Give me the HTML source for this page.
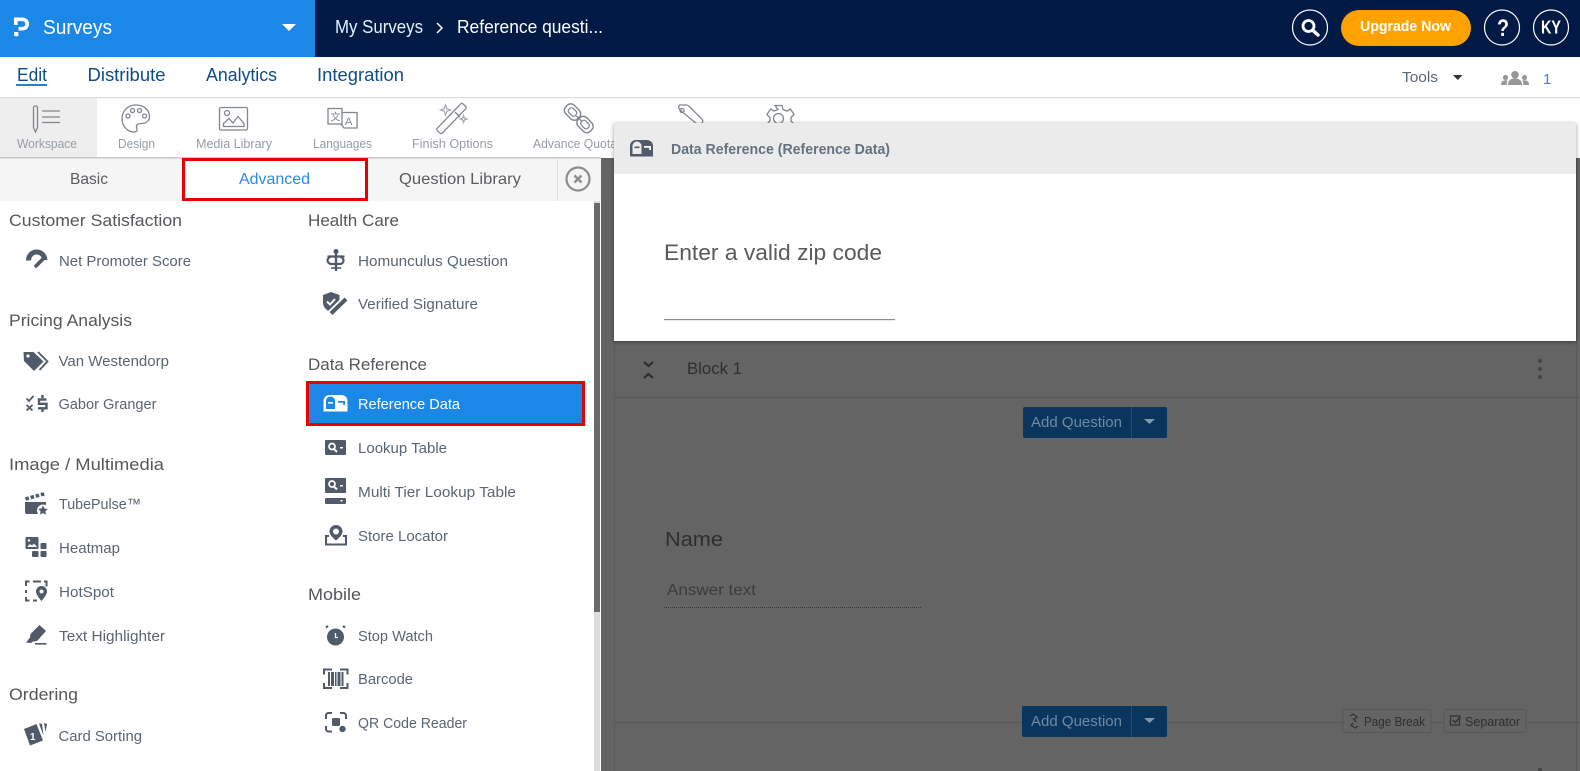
<!DOCTYPE html>
<html lang="en"><head><meta charset="utf-8"><title>Surveys</title>
<style>
html,body{margin:0;padding:0;background:#fff;width:1580px;height:771px;overflow:hidden}
svg{display:block}
text{font-family:"Liberation Sans",sans-serif}
.h{font-size:17px;fill:#55575b}
.i{font-size:15px;fill:#5a6573}
.t{font-size:12.5px;fill:#969da6}
.n{font-size:18px;fill:#0f4c86}
.s{fill:none;stroke:#80868f;stroke-width:1.3}
.g{fill:#505a69}
</style></head><body>
<svg width="1580" height="771" viewBox="0 0 1580 771" xmlns="http://www.w3.org/2000/svg">
<rect width="1580" height="771" fill="#fff"/>
<!-- top bar -->
<rect width="1580" height="57" fill="#001a45"/>
<rect width="315" height="57" fill="#1b88e8"/>
<path d="M14 17.500h8.500a6.500 6.500 0 0 1 0 13H18.500v-3.600h4a2.900 2.900 0 0 0 0-5.800H14z" fill="#fff"/>
<rect x="14" y="21" width="3.600" height="4" fill="#fff"/>
<rect x="14" y="32" width="4.500" height="4.200" rx="1.500" fill="#fff"/>
<text x="43" y="34" font-size="20" fill="#fff" textLength="69" lengthAdjust="spacingAndGlyphs">Surveys</text>
<path d="M282 24h14l-7 7z" fill="#fff"/>
<text x="335" y="33" font-size="18" fill="#e3f2fd" textLength="88" lengthAdjust="spacingAndGlyphs">My Surveys</text>
<path d="M437 23l5 5-5 5" fill="none" stroke="#fff" stroke-width="1.500"/>
<text x="457" y="33" font-size="18" fill="#fff" textLength="146" lengthAdjust="spacingAndGlyphs">Reference questi...</text>
<circle cx="1310" cy="27.500" r="17.500" fill="none" stroke="#fff" stroke-width="1.200"/>
<circle cx="1308.500" cy="26" r="5.500" fill="none" stroke="#fff" stroke-width="2.800"/>
<path d="M1313 30.500l5 4.500" stroke="#fff" stroke-width="3.400" stroke-linecap="round"/>
<rect x="1341" y="10" width="130" height="36" rx="18" fill="#ffa200"/>
<text x="1360" y="31" font-size="14.500" font-weight="bold" fill="#fff" textLength="91" lengthAdjust="spacingAndGlyphs">Upgrade Now</text>
<circle cx="1502" cy="27.500" r="17.500" fill="none" stroke="#fff" stroke-width="1.200"/>
<text x="1497" y="36" font-size="24" font-weight="bold" fill="#fff" textLength="12" lengthAdjust="spacingAndGlyphs">?</text>
<circle cx="1551" cy="27.500" r="17.500" fill="none" stroke="#fff" stroke-width="1.200"/>
<text x="1541" y="33.500" font-size="18" font-weight="bold" fill="#fff" textLength="20" lengthAdjust="spacingAndGlyphs">KY</text>
<!-- nav -->
<text x="17" y="81" class="n" textLength="30" lengthAdjust="spacingAndGlyphs">Edit</text>
<rect x="16" y="84" width="31" height="2" fill="#1b88c9"/>
<text x="87.500" y="81" class="n" textLength="78" lengthAdjust="spacingAndGlyphs">Distribute</text>
<text x="206" y="81" class="n" textLength="71" lengthAdjust="spacingAndGlyphs">Analytics</text>
<text x="317" y="81" class="n" textLength="87" lengthAdjust="spacingAndGlyphs">Integration</text>
<text x="1402" y="82" font-size="15" fill="#5b6875" textLength="36" lengthAdjust="spacingAndGlyphs">Tools</text>
<path d="M1453 75h9.500l-4.750 5z" fill="#333"/>
<g fill="#979797"><circle cx="1515" cy="74.800" r="3.800"/><path d="M1508 85c0-4.500 2.500-6.500 7-6.500s7 2 7 6.500z"/><circle cx="1505.500" cy="77.500" r="2.600"/><path d="M1501 85c0-3 1.500-4.800 4.500-4.800 1 0 1.500.2 2 .5-.6 1-.8 2.600-.8 4.300z"/><circle cx="1524.500" cy="77.500" r="2.600"/><path d="M1529 85c0-3-1.500-4.800-4.500-4.800-1 0-1.500.2-2 .5.600 1 .8 2.600.8 4.300z"/></g>
<text x="1543" y="84" font-size="15" fill="#3a86d8">1</text>
<rect y="97" width="1580" height="1.200" fill="#dcdcdc"/>
<!-- toolbar -->
<rect y="98" width="97" height="60" fill="#eeeeee"/>
<g class="s">
<path d="M33.500 107.500a1.500 1.500 0 0 1 1.500-1.500h1a1.500 1.500 0 0 1 1.500 1.500v20l-2 4.500-2-4.500z"/><path d="M42 111h18M42 117h18M42 122.500h18"/>
<path d="M136 105c-8 0-14 6-14 13.500 0 7 5 13.500 12 13.500 4 0 3-3 2.500-5-.5-2.500 2-3.500 5-3.500 5 0 8-3 8-6.500C149.500 110 144 105 136 105z"/>
<circle cx="128" cy="116" r="2"/><circle cx="132.500" cy="110.500" r="2"/><circle cx="139.500" cy="110.500" r="2"/><circle cx="144.500" cy="116" r="2"/>
<rect x="219.500" y="107.500" width="28" height="22.500" rx="1.500"/><circle cx="227" cy="113" r="2.500"/><path d="M223.500 126.500v-3l5.500-5 4 4.500 5-6.500 6 7v3z"/>
<path d="M328 108.500h14v15.500h-14z"/><path d="M342 112.500h15v15.500h-13l-3-4"/>
<rect x="448" y="100" width="7" height="37" rx="1.500" transform="rotate(44 451.500 118.500)"/>
<path d="M456 113l5 5" transform="translate(-1 -1)"/>
<path d="M445.500 105l1.300 3.700 3.700 1.300-3.700 1.300-1.300 3.700-1.300-3.700-3.700-1.300 3.700-1.300z" stroke="#a8adb4"/><path d="M463.500 115.500l.9 2.600 2.600.9-2.600.9-.9 2.600-.9-2.600-2.600-.9 2.600-.9z" stroke="#a8adb4"/>
<rect x="564" y="106" width="17" height="12" rx="5" transform="rotate(45 572.500 112)" stroke-width="1.400"/>
<rect x="568" y="109" width="9" height="6" rx="2.500" transform="rotate(45 572.500 112)"/>
<rect x="576.500" y="118.500" width="17" height="12" rx="5" transform="rotate(45 585 124.500)" stroke-width="1.400"/>
<rect x="580.500" y="121.500" width="9" height="6" rx="2.500" transform="rotate(45 585 124.500)"/>
<path d="M576.500 116l5 5"/>
<path d="M680 105h6a4 4 0 0 1 3 1.200l13 13c1 1 1 2.500 0 3.500l-3 3-17-14-2.500-2.500a3 3 0 0 1-.8-2V108a3 3 0 0 1 1.300-3z"/><circle cx="682" cy="110.500" r="2"/>
<path d="M775 105.500h7l1 4 4 1.500 3.500-2 3.500 5.500-3 3v3.500l3 3-3.500 5h-20l-3.500-5 3-3V117.500l-3-3 3.500-5.500 3.500 2 4-1.500z"/><circle cx="778.500" cy="118.500" r="5"/>
</g>
<text x="330.500" y="120.500" font-size="10" fill="#7f858e" style="font-family:'Noto Sans CJK SC',sans-serif">文</text>
<text x="345" y="125" font-size="11" fill="#7f858e">A</text>
<text x="17" y="148" class="t" textLength="60" lengthAdjust="spacingAndGlyphs">Workspace</text>
<text x="118" y="148" class="t" textLength="37" lengthAdjust="spacingAndGlyphs">Design</text>
<text x="196" y="148" class="t" textLength="76" lengthAdjust="spacingAndGlyphs">Media Library</text>
<text x="313" y="148" class="t" textLength="59" lengthAdjust="spacingAndGlyphs">Languages</text>
<text x="412" y="148" class="t" textLength="81" lengthAdjust="spacingAndGlyphs">Finish Options</text>
<text x="533" y="148" class="t" textLength="84" lengthAdjust="spacingAndGlyphs">Advance Quota</text>
<!-- tabs -->
<rect y="157" width="601" height="44" fill="#f5f5f5"/>
<rect y="157" width="601" height="1.500" fill="#c8c8c8"/>
<text x="70" y="184" font-size="16" fill="#5a5c60" textLength="38" lengthAdjust="spacingAndGlyphs">Basic</text>
<rect x="183.500" y="159.500" width="183" height="40" fill="#fff" stroke="#e60000" stroke-width="3"/>
<text x="239" y="184" font-size="16" fill="#2b8ae6" textLength="71" lengthAdjust="spacingAndGlyphs">Advanced</text>
<text x="399" y="184" font-size="16" fill="#5a5c60" textLength="122" lengthAdjust="spacingAndGlyphs">Question Library</text>
<rect x="557" y="158" width="1" height="43" fill="#ddd"/>
<circle cx="578" cy="179" r="11.500" fill="none" stroke="#8d8d8d" stroke-width="2.200"/>
<path d="M574.500 175.500l7 7M581.500 175.500l-7 7" stroke="#8d8d8d" stroke-width="2.400"/>
<!-- scrollbar -->
<rect x="594" y="201" width="6" height="570" fill="#dcdcdc"/>
<rect x="594" y="203" width="6" height="409" fill="#6a6a6a"/>
<!-- sidebar left -->
<text x="9" y="226" class="h" textLength="173" lengthAdjust="spacingAndGlyphs">Customer Satisfaction</text>
<path d="M28.500 260.500a8.200 8.200 0 0 1 16.400-.5" fill="none" stroke="#505a69" stroke-width="5"/>
<path d="M36 266l7-7" stroke="#fff" stroke-width="6"/>
<path d="M36 266l7.500-7.500" stroke="#505a69" stroke-width="3.600" stroke-linecap="round"/>
<text x="59" y="266" class="i" textLength="132" lengthAdjust="spacingAndGlyphs">Net Promoter Score</text>
<text x="9" y="326" class="h" textLength="123" lengthAdjust="spacingAndGlyphs">Pricing Analysis</text>
<path d="M23.500 352h10l10 9.500-9.500 9.500-10-10z" class="g"/><path d="M38 352l9.500 9.500-8 8.500" fill="none" stroke="#505a69" stroke-width="1.800"/><circle cx="28" cy="356" r="1.600" fill="#fff"/>
<text x="58.500" y="366" class="i" textLength="110.500" lengthAdjust="spacingAndGlyphs">Van Westendorp</text>
<path d="M26.500 398.500l2.500 2.500 4.500-5M26.500 405l6 5.500M32.500 405l-6 5.500" fill="none" stroke="#505a69" stroke-width="1.800"/>
<path d="M46.500 399.500h-7.500v4.300h7.500v4.500h-8.500M42.500 395v3M42.500 409v3" fill="none" stroke="#505a69" stroke-width="2.400"/>
<text x="58.500" y="409" class="i" textLength="98" lengthAdjust="spacingAndGlyphs">Gabor Granger</text>
<text x="9" y="470" class="h" textLength="155" lengthAdjust="spacingAndGlyphs">Image / Multimedia</text>
<path d="M25.500 499l20-5.500" stroke="#505a69" stroke-width="3.600" stroke-dasharray="3.500 1.800"/>
<path d="M25 502h21v12H27a2 2 0 0 1-2-2z" class="g"/><circle cx="43" cy="510.500" r="6" fill="#fff"/><path d="M43 505.500l1.500 3 3.300.5-2.400 2.300.6 3.300-3-1.600-3 1.600.6-3.300-2.400-2.300 3.300-.5z" class="g"/>
<text x="59" y="509" class="i" textLength="82" lengthAdjust="spacingAndGlyphs">TubePulse™</text>
<rect x="25.500" y="537" width="13" height="12" rx="1" class="g"/><circle cx="29" cy="540.500" r="1.200" fill="#fff"/><path d="M27 547l3-3 2 1.500 2-2 3 3.500z" fill="#fff"/><rect x="40.500" y="543" width="6" height="6" rx="1" class="g"/><rect x="32" y="551" width="6.500" height="6" rx="1" class="g"/><rect x="40.500" y="551" width="6" height="6" rx="1" class="g"/>
<text x="59" y="553" class="i" textLength="61" lengthAdjust="spacingAndGlyphs">Heatmap</text>
<path d="M26 586v-4.500h3.500M33 581.500h8M44 581.500h2.500v5M26 590v3M26 597v3.500h3.500M33 600.500h4" fill="none" stroke="#505a69" stroke-width="2"/><path d="M41.500 586a5.500 5.500 0 0 0-5.500 5.500c0 3.500 5.500 9.500 5.500 9.500s5.500-6 5.500-9.500a5.500 5.500 0 0 0-5.500-5.500z" class="g"/><circle cx="41.500" cy="591.500" r="2" fill="#fff"/>
<text x="59" y="597" class="i" textLength="55" lengthAdjust="spacingAndGlyphs">HotSpot</text>
<path d="M26 642.500l4-5 .5-3.500 9-9 6.500 6-9 10-4 .5-2 1.500z" class="g"/><rect x="35" y="643" width="11.500" height="1.600" class="g"/>
<text x="59" y="641" class="i" textLength="106" lengthAdjust="spacingAndGlyphs">Text Highlighter</text>
<text x="9" y="700" class="h" textLength="69" lengthAdjust="spacingAndGlyphs">Ordering</text>
<path d="M24 729l12.500-5 6.500 16.500-13 5z" class="g"/><path d="M39 723.500l3 .3 1.500 12zM44 723l3 1-1.500 8z" class="g"/><text x="30" y="740" font-size="10" font-weight="bold" fill="#fff">1</text>
<text x="58.500" y="741" class="i" textLength="83.500" lengthAdjust="spacingAndGlyphs">Card Sorting</text>
<!-- sidebar right -->
<text x="308" y="226" class="h" textLength="91" lengthAdjust="spacingAndGlyphs">Health Care</text>
<circle cx="336" cy="251.500" r="2.500" class="g"/>
<path d="M336 252v19" stroke="#505a69" stroke-width="2.400"/>
<path d="M327.500 256.500h17M331 256.500c-2.500 1-3.500 2.500-3.500 4s1.500 3.500 4 3.500h8c2.500 0 4-1.500 4-3.500s-1-3-3.500-4" fill="none" stroke="#505a69" stroke-width="2.200"/>
<path d="M331 268h10" stroke="#505a69" stroke-width="1.600"/>
<text x="358" y="266" class="i" textLength="150" lengthAdjust="spacingAndGlyphs">Homunculus Question</text>
<path d="M331 292l8.500 3v7.500c0 4.500-3.500 7.500-8.500 10-5-2.500-8-5.500-8-10V295z" class="g"/>
<path d="M327 301.500l3 3 5-5.500" fill="none" stroke="#fff" stroke-width="2"/>
<path d="M330 314l16-15.500" stroke="#fff" stroke-width="7"/>
<path d="M331 313.500l15-14.500" stroke="#505a69" stroke-width="4"/>
<text x="358" y="309" class="i" textLength="120" lengthAdjust="spacingAndGlyphs">Verified Signature</text>
<text x="308" y="370" class="h" textLength="119" lengthAdjust="spacingAndGlyphs">Data Reference</text>
<rect x="307.500" y="382.500" width="276" height="42" fill="#1b87e6" stroke="#e60000" stroke-width="3"/>
<path d="M323.500 411.500V401a6 6 0 0 1 6-6h12a6 6 0 0 1 6 6v10.500z" fill="#fff"/><path d="M326 409v-8a4.500 4.500 0 0 1 9 0v8z" fill="#1b87e6"/><rect x="328" y="402" width="5" height="1.600" fill="#fff"/><path d="M338 401h7v4h-1.800v-2.300H338z" fill="#1b87e6"/>
<text x="358" y="409" font-size="15" fill="#fff" textLength="102" lengthAdjust="spacingAndGlyphs">Reference Data</text>
<rect x="325" y="440" width="21" height="15" rx="1" class="g"/><circle cx="332" cy="446.500" r="3" fill="none" stroke="#fff" stroke-width="1.700"/><path d="M334 449l3 3" stroke="#fff" stroke-width="2"/><rect x="340" y="447" width="3" height="1.500" fill="#fff"/>
<text x="358" y="453" class="i" textLength="89" lengthAdjust="spacingAndGlyphs">Lookup Table</text>
<rect x="325" y="478" width="21" height="15" rx="1" class="g"/><circle cx="332" cy="484" r="3" fill="none" stroke="#fff" stroke-width="1.700"/><path d="M334 486.500l3 3" stroke="#fff" stroke-width="2"/><rect x="340" y="485" width="3" height="1.500" fill="#fff"/><rect x="325" y="498" width="21" height="6" rx="1" class="g"/><path d="M340 500h3l-1.500 2z" fill="#fff"/>
<text x="358" y="497" class="i" textLength="158" lengthAdjust="spacingAndGlyphs">Multi Tier Lookup Table</text>
<path d="M336 525a6.500 6.500 0 0 0-6.500 6.500c0 4 6.500 9 6.500 9s6.500-5 6.500-9a6.500 6.500 0 0 0-6.500-6.500z" class="g"/><circle cx="336" cy="531.500" r="3" fill="#fff"/><path d="M326 544.500v-8.500h3M343 536h3v8.500M325 544.500h22" fill="none" stroke="#505a69" stroke-width="2"/>
<text x="358" y="541" class="i" textLength="90" lengthAdjust="spacingAndGlyphs">Store Locator</text>
<text x="308" y="600" class="h" textLength="53" lengthAdjust="spacingAndGlyphs">Mobile</text>
<circle cx="335.500" cy="637" r="8.500" class="g"/><path d="M335.500 633v4.500h2.500" stroke="#fff" stroke-width="1.300" fill="none"/><path d="M328 626l-2 1.500M343 626l2 1.500" stroke="#505a69" stroke-width="2.200"/>
<text x="358" y="641" class="i" textLength="75" lengthAdjust="spacingAndGlyphs">Stop Watch</text>
<path d="M324 674.500v-5h8M340 669.500h7.500v5M324 683v5h8M340 688h7.500v-5" fill="none" stroke="#505a69" stroke-width="2"/>
<path d="M328 672v14h2v-14zM331 672v14h3v-14zM335 672v14h1.500v-14zM337.500 672v14h3v-14zM341.500 672v14h2v-14z" class="g"/>
<text x="358" y="684" class="i" textLength="55" lengthAdjust="spacingAndGlyphs">Barcode</text>
<path d="M326 719v-3.500a2.500 2.500 0 0 1 2.500-2.500h3.500M340 713h3.500a2.500 2.500 0 0 1 2.500 2.500v3.500M326 726v3a2.500 2.500 0 0 0 2.500 2.500h3.500" fill="none" stroke="#505a69" stroke-width="2"/><rect x="332" y="718" width="8" height="8" rx="1.500" class="g"/><circle cx="342.500" cy="729" r="3.200" class="g"/>
<text x="358" y="728" class="i" textLength="109" lengthAdjust="spacingAndGlyphs">QR Code Reader</text>
<!-- main overlay -->
<rect x="601" y="158" width="979" height="613" fill="#646464"/>
<rect x="614" y="158" width="1" height="613" fill="#5a5a5a"/>
<rect x="1576" y="158" width="1" height="613" fill="#5a5a5a"/>
<path d="M644 362l4.500 4 4.500-4M644 378l4.500-4 4.500 4" fill="none" stroke="#2b2b2b" stroke-width="2"/>
<text x="687" y="374" font-size="17" fill="#2e2e30" textLength="55" lengthAdjust="spacingAndGlyphs">Block 1</text>
<circle cx="1540" cy="361" r="2" fill="#444"/><circle cx="1540" cy="369" r="2" fill="#444"/><circle cx="1540" cy="377" r="2" fill="#444"/>
<rect x="615" y="397" width="965" height="1" fill="#595959"/>
<rect x="1023" y="407" width="144" height="31" rx="2" fill="#0a355c"/>
<rect x="1131" y="407" width="1" height="31" fill="#1d5078"/>
<text x="1031" y="427" font-size="15" fill="#6f8ba3" textLength="91" lengthAdjust="spacingAndGlyphs">Add Question</text>
<path d="M1144 419h11l-5.500 5z" fill="#7e99b0"/>
<text x="665" y="546" font-size="20" fill="#2e2e30" textLength="58" lengthAdjust="spacingAndGlyphs">Name</text>
<text x="667" y="595" font-size="16" fill="#3b3b3b" textLength="89" lengthAdjust="spacingAndGlyphs">Answer text</text>
<path d="M664 607.500h258" stroke="#383838" stroke-dasharray="1 1"/>
<rect x="615" y="722" width="965" height="1" fill="#575757"/>
<rect x="1022" y="706" width="145" height="31" rx="2" fill="#0a355c"/>
<rect x="1131" y="706" width="1" height="31" fill="#1d5078"/>
<text x="1031" y="726" font-size="15" fill="#6f8ba3" textLength="91" lengthAdjust="spacingAndGlyphs">Add Question</text>
<path d="M1144 718h11l-5.500 5z" fill="#7e99b0"/>
<rect x="1343" y="709.500" width="88" height="23" rx="2" fill="#646464" stroke="#585858"/>
<path d="M1350 716l3-2 4 3-2 2M1358 726l-3 2-4-3 2-2M1353 718l3 4" fill="none" stroke="#333" stroke-width="1.300"/>
<text x="1364" y="726" font-size="12.500" fill="#2f2f2f" textLength="61" lengthAdjust="spacingAndGlyphs">Page Break</text>
<rect x="1444" y="709.500" width="82" height="23" rx="2" fill="#646464" stroke="#585858"/>
<rect x="1450.500" y="716" width="9" height="9" fill="none" stroke="#333" stroke-width="1.300"/><path d="M1453 720l2.500 2.500 5-6" fill="none" stroke="#333" stroke-width="1.500"/>
<text x="1465" y="726" font-size="12.500" fill="#2f2f2f" textLength="55" lengthAdjust="spacingAndGlyphs">Separator</text>
<circle cx="1540" cy="770" r="2" fill="#444"/>
<!-- modal -->
<defs><filter id="sh" x="-2%" y="-5%" width="104%" height="110%"><feDropShadow dx="0" dy="1" stdDeviation="2" flood-color="#000" flood-opacity=".4"/></filter></defs>
<rect x="614" y="123" width="962" height="218" fill="#fff" filter="url(#sh)"/>
<rect x="614" y="123" width="962" height="51" fill="#ebebeb"/>
<path d="M630 156.500v-10.500a6 6 0 0 1 6-6h11a6 6 0 0 1 6 6v10.500z" class="g"/><path d="M632.500 154v-8a4.500 4.500 0 0 1 9 0v8z" fill="#ebebeb"/><rect x="634.500" y="146.500" width="5" height="1.600" class="g"/><path d="M644 146h7v4h-1.800v-2.300H644z" fill="#fff"/>
<text x="671" y="154" font-size="14.500" font-weight="bold" fill="#667180" textLength="219" lengthAdjust="spacingAndGlyphs">Data Reference (Reference Data)</text>
<text x="664" y="260" font-size="22" fill="#5a5a5a" textLength="218" lengthAdjust="spacingAndGlyphs">Enter a valid zip code</text>
<rect x="664" y="319" width="231" height="1.200" fill="#8e8e8e"/>
</svg>
</body></html>
